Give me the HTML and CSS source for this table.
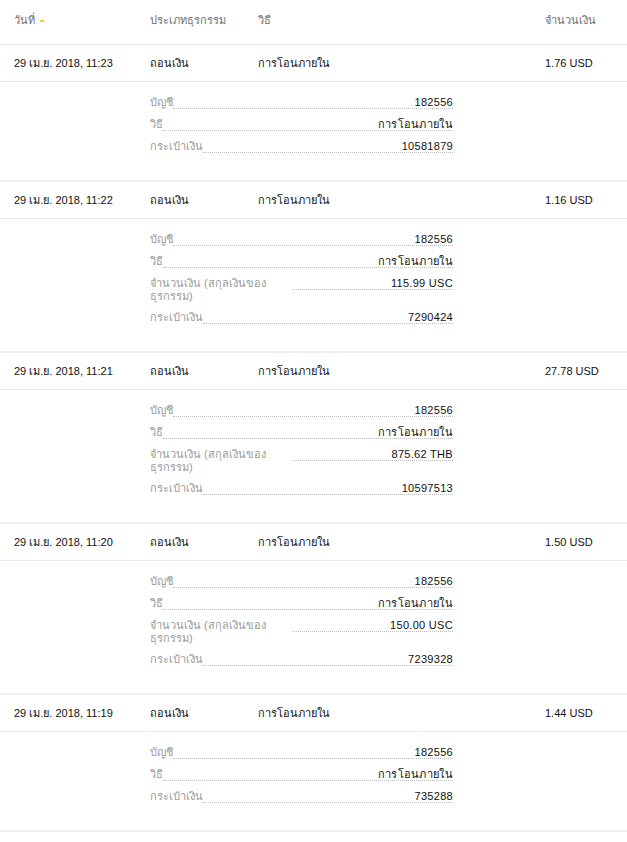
FILE: index.html
```html
<!DOCTYPE html>
<html lang="th">
<head>
<meta charset="utf-8">
<title>ประวัติธุรกรรม</title>
<link rel="stylesheet" href="styles.css">
</head>
<body>
<div class="table">
  <div class="row head">
    <div class="c-date">วันที่ <span class="sort"></span></div>
    <div class="c-type">ประเภทธุรกรรม</div>
    <div class="c-method">วิธี</div>
    <div class="c-amount">จำนวนเงิน</div>
  </div>

  <div class="group">
    <div class="row main">
      <div class="c-date">29 เม.ย. 2018, 11:23</div>
      <div class="c-type">ถอนเงิน</div>
      <div class="c-method">การโอนภายใน</div>
      <div class="c-amount">1.76 USD</div>
    </div>
    <div class="details">
      <div class="item"><div class="label">บัญชี</div><div class="value">182556</div></div>
      <div class="item"><div class="label">วิธี</div><div class="value">การโอนภายใน</div></div>
      <div class="item"><div class="label">กระเป๋าเงิน</div><div class="value">10581879</div></div>
    </div>
  </div>

  <div class="group">
    <div class="row main">
      <div class="c-date">29 เม.ย. 2018, 11:22</div>
      <div class="c-type">ถอนเงิน</div>
      <div class="c-method">การโอนภายใน</div>
      <div class="c-amount">1.16 USD</div>
    </div>
    <div class="details">
      <div class="item"><div class="label">บัญชี</div><div class="value">182556</div></div>
      <div class="item"><div class="label">วิธี</div><div class="value">การโอนภายใน</div></div>
      <div class="item two"><div class="label wide">จำนวนเงิน (สกุลเงินของ ธุรกรรม)</div><div class="value">115.99 USC</div></div>
      <div class="item"><div class="label">กระเป๋าเงิน</div><div class="value">7290424</div></div>
    </div>
  </div>

  <div class="group">
    <div class="row main">
      <div class="c-date">29 เม.ย. 2018, 11:21</div>
      <div class="c-type">ถอนเงิน</div>
      <div class="c-method">การโอนภายใน</div>
      <div class="c-amount">27.78 USD</div>
    </div>
    <div class="details">
      <div class="item"><div class="label">บัญชี</div><div class="value">182556</div></div>
      <div class="item"><div class="label">วิธี</div><div class="value">การโอนภายใน</div></div>
      <div class="item two"><div class="label wide">จำนวนเงิน (สกุลเงินของ ธุรกรรม)</div><div class="value">875.62 THB</div></div>
      <div class="item"><div class="label">กระเป๋าเงิน</div><div class="value">10597513</div></div>
    </div>
  </div>

  <div class="group">
    <div class="row main">
      <div class="c-date">29 เม.ย. 2018, 11:20</div>
      <div class="c-type">ถอนเงิน</div>
      <div class="c-method">การโอนภายใน</div>
      <div class="c-amount">1.50 USD</div>
    </div>
    <div class="details">
      <div class="item"><div class="label">บัญชี</div><div class="value">182556</div></div>
      <div class="item"><div class="label">วิธี</div><div class="value">การโอนภายใน</div></div>
      <div class="item two"><div class="label wide">จำนวนเงิน (สกุลเงินของ ธุรกรรม)</div><div class="value">150.00 USC</div></div>
      <div class="item"><div class="label">กระเป๋าเงิน</div><div class="value">7239328</div></div>
    </div>
  </div>

  <div class="group">
    <div class="row main">
      <div class="c-date">29 เม.ย. 2018, 11:19</div>
      <div class="c-type">ถอนเงิน</div>
      <div class="c-method">การโอนภายใน</div>
      <div class="c-amount">1.44 USD</div>
    </div>
    <div class="details">
      <div class="item"><div class="label">บัญชี</div><div class="value">182556</div></div>
      <div class="item"><div class="label">วิธี</div><div class="value">การโอนภายใน</div></div>
      <div class="item"><div class="label">กระเป๋าเงิน</div><div class="value">735288</div></div>
    </div>
  </div>
</div>
</body>
</html>
```

FILE: styles.css
```css
html, body {
  margin: 0;
  padding: 0;
  background: #ffffff;
}
body {
  font-family: "Liberation Sans", Arial, "Noto Sans", sans-serif;
  font-size: 11px;
  color: #1a1a1a;
}
.table {
  width: 627px;
}
.row {
  display: flex;
  align-items: center;
}
.c-date {
  width: 136px;
  padding-left: 14px;
  flex: none;
}
.c-type {
  width: 108px;
  flex: none;
}
.c-method {
  flex: 1;
}
.c-amount {
  width: 82px;
  flex: none;
}
.head {
  height: 40px;
  padding-bottom: 4px;
  border-bottom: 1px solid #e6e6e6;
  color: #707070;
}
.sort {
  display: inline-block;
  width: 0;
  height: 0;
  border-left: 3px solid transparent;
  border-right: 3px solid transparent;
  border-bottom: 3px solid #f5d000;
  vertical-align: 2px;
  margin-left: 1px;
}
.group {
  border-bottom: 2px solid #efefef;
}
.main {
  height: 36px;
  border-bottom: 1px solid #ececec;
  color: #111;
}
.details {
  margin-left: 150px;
  width: 303px;
  padding: 14px 0 27px;
}
.item {
  display: flex;
  align-items: flex-start;
  line-height: 13px;
  margin-bottom: 9px;
}
.item.two {
  margin-bottom: 8px;
}
.item:last-child {
  margin-bottom: 0;
}
.label {
  flex: none;
  max-width: 142px;
  color: #9a9a9a;
}
.label.wide {
  width: 142px;
}
.value {
  flex: 1;
  text-align: right;
  border-bottom: 1px dotted #bdbdbd;
  height: 12px;
  color: #111;
  letter-spacing: 0.3px;
}
```
